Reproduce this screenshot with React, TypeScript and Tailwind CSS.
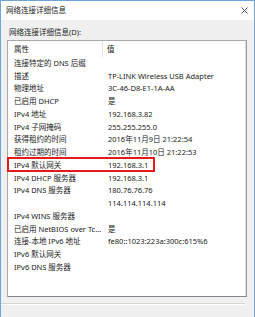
import React from "react";

const rows: [string, string][] = [
  ["连接特定的 DNS 后缀", ""],
  ["描述", "TP-LINK Wireless USB Adapter"],
  ["物理地址", "3C-46-D8-E1-1A-AA"],
  ["已启用 DHCP", "是"],
  ["IPv4 地址", "192.168.3.82"],
  ["IPv4 子网掩码", "255.255.255.0"],
  ["获得租约的时间", "2016年11月9日 21:22:54"],
  ["租约过期的时间", "2016年11月10日 21:22:53"],
  ["IPv4 默认网关", "192.168.3.1"],
  ["IPv4 DHCP 服务器", "192.168.3.1"],
  ["IPv4 DNS 服务器", "180.76.76.76"],
  ["", "114.114.114.114"],
  ["IPv4 WINS 服务器", ""],
  ["已启用 NetBIOS over Tc...", "是"],
  ["连接-本地 IPv6 地址", "fe80::1023:223a:300c:615%6"],
  ["IPv6 默认网关", ""],
  ["IPv6 DNS 服务器", ""],
];

const font = {
  fontFamily: '"Noto Sans", "Noto Sans CJK SC", sans-serif',
};

export default function App() {
  return (
    <div
      className="relative w-[255px] h-[317px] bg-[#f0f0f0] border-x border-t border-[#6fa5d8] flex flex-col text-[7.5px] text-[#1a1a1a] leading-[11px] overflow-hidden"
      style={font}
    >
      {/* title bar */}
      <div className="h-[19px] bg-white flex items-center justify-between pl-[5px] pr-[6px] shrink-0">
        <span>网络连接详细信息</span>
        <svg width="7" height="7" viewBox="0 0 7 7">
          <path d="M0.5 0.5 L6.5 6.5 M6.5 0.5 L0.5 6.5" stroke="#555" strokeWidth="1" />
        </svg>
      </div>

      {/* body */}
      <div className="flex flex-col pl-[6px] pr-[7px]">
        <div className="h-[20px] flex items-end pl-[2px] pb-[2px]">网络连接详细信息(D):</div>
        <div className="h-[257px] bg-white border border-[#a9a9a9] border-b-[#828790] border-r-[#9a9a9a] flex">
          <div className="flex-1 flex flex-col border-r border-[#dcdcdc]">
            <div className="h-[16px] flex items-center shrink-0">
              <div className="w-[95px] h-full flex items-center pl-[6px] border-r border-[#e3e3e3]">属性</div>
              <div className="pl-[4px]">值</div>
            </div>
            {rows.map(([k, v], i) => (
              <div key={i} className="h-[12.75px] flex items-center shrink-0 whitespace-nowrap">
                <div className="w-[95px] shrink-0 pl-[6px]">{k}</div>
                <div className="pl-[5px]">{v}</div>
              </div>
            ))}
          </div>
        </div>
      </div>

      <div className="mt-[6px] mr-[9px] border-t border-[#d5d5d5] border-b border-b-white" />

      {/* red annotation box */}
      <div className="absolute left-[6px] top-[156px] w-[148px] h-[15px] border-2 border-[#e5191b]" />
    </div>
  );
}
